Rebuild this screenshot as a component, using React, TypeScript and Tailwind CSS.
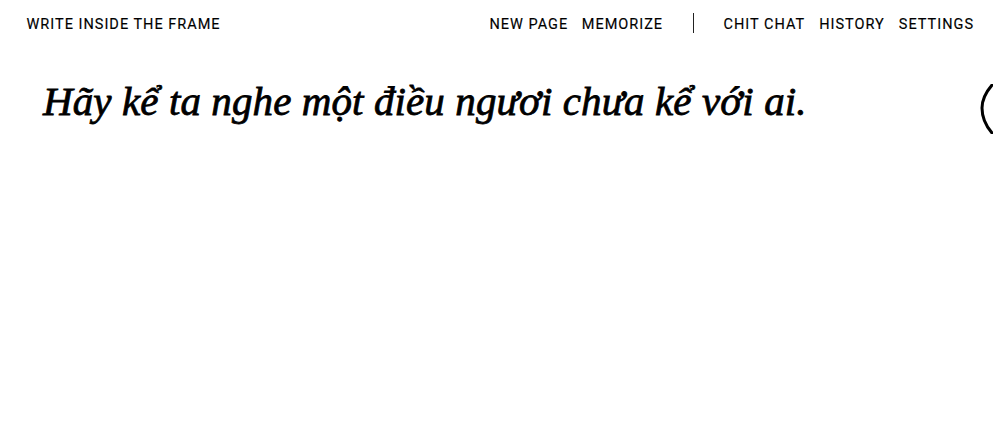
import React from 'react'

const leftLinks = ['NEW PAGE', 'MEMORIZE']
const rightLinks = ['CHIT CHAT', 'HISTORY', 'SETTINGS']

function NavLink({ label }: { label: string }) {
  return <a className="whitespace-nowrap">{label}</a>
}

export default function App() {
  return (
    <div className="h-[442px] w-[1000px] overflow-hidden bg-white font-['Roboto',sans-serif] text-black">
      <header className="flex h-[46px] items-center justify-between pl-[26.5px] pr-[26px] text-[14.5px] font-normal leading-none tracking-[1px] text-black [-webkit-text-stroke:0.15px_black]">
        <span className="pt-[5px]">WRITE INSIDE THE FRAME</span>
        <nav className="flex items-center">
          <div className="flex gap-[13.5px] pt-[5px]">
            {leftLinks.map((l) => (
              <NavLink key={l} label={l} />
            ))}
          </div>
          <div className="ml-[29.5px] mr-[30px] h-[20px] w-px bg-[#222]" />
          <div className="flex gap-[14px] pt-[5px]">
            {rightLinks.map((l) => (
              <NavLink key={l} label={l} />
            ))}
          </div>
        </nav>
      </header>
      <main className="flex items-start justify-between pl-[43px] pr-[7px] pt-[28px]">
        <p className="whitespace-nowrap font-['Liberation_Serif',serif] text-[41px] italic leading-[54px] tracking-[0.1px] [-webkit-text-stroke:0.8px_black]">
          Hãy kể ta nghe một điều ngươi chưa kể với ai.
        </p>
        <svg width="13" height="50" viewBox="0 0 13 50" className="mt-[10px] shrink-0" fill="none">
          <path d="M12 1 C6 8 2 16 2 24 C2 33 6 42 12 49" stroke="black" strokeWidth="3" strokeLinecap="round" />
        </svg>
      </main>
    </div>
  )
}
